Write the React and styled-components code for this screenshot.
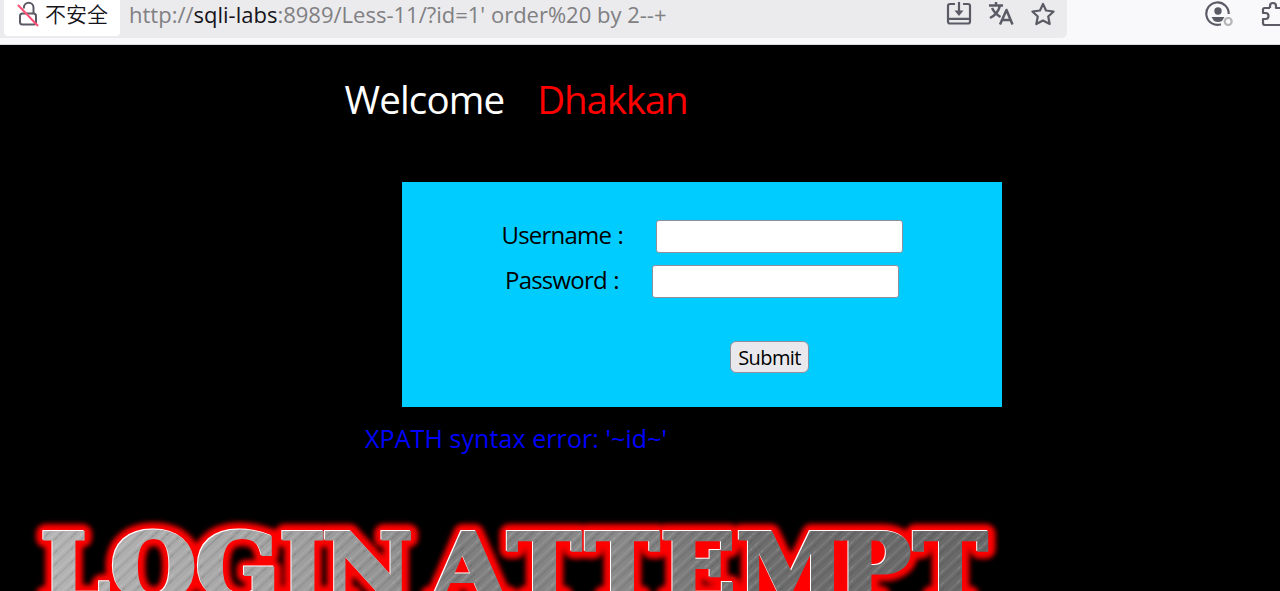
import React from "react";
import styled, { createGlobalStyle } from "styled-components";

const Global = createGlobalStyle`
  * { box-sizing: border-box; }
  body {
    margin: 0;
    background: #000;
    overflow: hidden;
    font-family: "Open Sans", "Noto Sans CJK SC", sans-serif;
  }
`;

const Page = styled.div`
  height: 591px;
  overflow: hidden;
  display: flex;
  flex-direction: column;
`;

const Toolbar = styled.header`
  height: 45px;
  flex: none;
  display: flex;
  align-items: flex-start;
  background: #f9f9fb;
  border-bottom: 1px solid #dcdcde;
`;

const AddressBar = styled.div`
  width: 1067px;
  height: 38px;
  flex: none;
  display: flex;
  padding-left: 4px;
  background: #ebebed;
  border-bottom-right-radius: 5px;
`;

const SecurityChip = styled.div`
  width: 116px;
  height: 36px;
  flex: none;
  display: flex;
  padding-left: 13px;
  background: #fff;
  border-radius: 0 0 4px 4px;
  font-family: "Noto Sans CJK SC", sans-serif;
  font-weight: 350;
  font-size: 21px;
  line-height: 27px;
  color: #15141a;
  white-space: nowrap;
`;

const Url = styled.div`
  width: 826px;
  flex: none;
  padding-left: 9px;
  font-size: 22px;
  line-height: 28px;
  color: #808083;
  white-space: pre;
`;

const Host = styled.span`
  color: #15141a;
`;

const BarIcons = styled.div`
  display: flex;
  gap: 14px;
`;

const WindowIcons = styled.div`
  width: 213px;
  display: flex;
  gap: 28px;
  padding-left: 138px;
  overflow: hidden;
`;

const Icon = styled.svg`
  width: 28px;
  height: 28px;
  flex: none;
  fill: none;
  stroke: #5b5b66;
  stroke-width: ${(p) => p.$weight || 2.2};
  stroke-linejoin: round;
`;

const Content = styled.main`
  flex: 1;
  display: flex;
  flex-direction: column;
  align-items: flex-start;
`;

const Heading = styled.div`
  display: flex;
  gap: 33px;
  margin: 26px 0 0 344.5px;
  font-size: 38.5px;
  line-height: 56px;
  white-space: nowrap;
`;

const HeadingWord = styled.span`
  color: ${(p) => p.$color};
  letter-spacing: ${(p) => p.$spacing}px;
`;

const LoginBox = styled.form`
  width: 600px;
  height: 225px;
  flex: none;
  margin: 55px 0 0 402px;
  padding-top: 38px;
  display: flex;
  flex-direction: column;
  align-items: center;
  background: #00ccff;
`;

const FieldRow = styled.label`
  height: 33px;
  margin-bottom: 12px;
  display: flex;
  align-items: center;
  font-size: 24px;
  line-height: 32px;
  color: #000;
`;

const FieldName = styled.span`
  width: ${(p) => p.$width}px;
  padding-bottom: 3px;
  letter-spacing: -0.8px;
  word-spacing: 1px;
  white-space: nowrap;
`;

const FieldInput = styled.input`
  width: 247px;
  height: 33px;
  margin: 0;
  padding: 2px;
  border: 1px solid #8f8f9d;
  border-radius: 3px;
  background: #fff;
  outline: none;
`;

const SubmitButton = styled.button`
  width: 79px;
  height: 32px;
  margin: 31px 0 0 135px;
  padding: 2px 0 0;
  border: 1px solid #8f8f9d;
  border-radius: 6px;
  background: #e9e9ed;
  color: #000;
  font: 20px/28px "Open Sans", sans-serif;
  letter-spacing: -0.6px;
`;

const ErrorText = styled.p`
  margin: 14px 0 0 365px;
  font-size: 25px;
  line-height: 34px;
  letter-spacing: 0.08px;
  color: #0000ff;
  white-space: nowrap;
`;

const Banner = styled.svg`
  display: block;
  width: 1040px;
  height: 96px;
  margin-top: 40px;
  flex: none;
  font-family: "DejaVu Serif", serif;
  font-weight: 700;
  font-size: 98px;
`;

const LETTERS_X = "41 111 196 280 323 0 431 508 586 661 737 837 914";

function BannerText(props) {
  return (
    <text x={LETTERS_X} y="111.5" {...props}>
      LOGIN ATTEMPT
    </text>
  );
}

function LoginAttempt() {
  return (
    <Banner viewBox="0 0 1040 102" preserveAspectRatio="none">
      <defs>
        <linearGradient id="steel" gradientUnits="userSpaceOnUse" x1="40" y1="0" x2="990" y2="0">
          <stop offset="0" stopColor="#b4b4b4" />
          <stop offset="0.22" stopColor="#a6a6a6" />
          <stop offset="0.36" stopColor="#949494" />
          <stop offset="0.44" stopColor="#7e7e7e" />
          <stop offset="0.6" stopColor="#8a8a8a" />
          <stop offset="0.75" stopColor="#6e6e6e" />
          <stop offset="1" stopColor="#686868" />
        </linearGradient>
        <pattern id="brush" width="19" height="60" patternUnits="userSpaceOnUse" patternTransform="rotate(45)">
          <path d="M2 0V60M11 0V60" stroke="#fff" strokeOpacity=".1" strokeWidth="1.4" />
          <path d="M6 0V60M15 0V60" stroke="#222" strokeOpacity=".1" strokeWidth="1.6" />
        </pattern>
        <filter id="glow" x="-5%" y="-30%" width="110%" height="160%">
          <feGaussianBlur stdDeviation="2.6" />
        </filter>
      </defs>
      <BannerText fill="#f00" stroke="#f00" strokeWidth="19" strokeLinejoin="round" filter="url(#glow)" aria-hidden="true" />
      <BannerText fill="#fff" stroke="#fff" strokeWidth="4.5" transform="translate(-1 -1)" aria-hidden="true" />
      <BannerText fill="url(#steel)" stroke="url(#steel)" strokeWidth="4.5" />
      <BannerText fill="url(#brush)" stroke="url(#brush)" strokeWidth="4.5" aria-hidden="true" />
    </Banner>
  );
}

export default function App() {
  return (
    <Page>
      <Global />
      <Toolbar>
        <AddressBar>
          <SecurityChip>
            <Icon viewBox="0 0 28 28" $weight={2}>
              <path d="M6.900 8.500V7.500a4.800 4.800 0 0 1 9.600 0V13" />
              <rect x="3" y="13.500" width="16" height="11" rx="2.500" />
              <path d="M1 5L21 26" stroke="#ff4f75" />
            </Icon>
            不安全
          </SecurityChip>
          <Url>
            http://<Host>sqli-labs</Host>:8989/Less-11/?id=1' order%20 by 2--+
          </Url>
          <BarIcons>
            <Icon viewBox="0 0 28 28">
              <path d="M9 4H4a2 2 0 0 0-2 2v15.500a2 2 0 0 0 2 2h18a2 2 0 0 0 2-2V6a2 2 0 0 0-2-2h-5M2 18.800h22M13 2v11" />
              <path d="M8.500 10.500h9L13 16z" fill="#5b5b66" stroke="none" />
            </Icon>
            <Icon viewBox="0 0 28 28" $weight={2.5}>
              <path d="M1 5.500h14M8 2v3M12 5.500C10.500 12 6 16 2 18M4 8c2 4 5 7 8.500 9M12 24.500L18.500 10l6 14.500M14.500 20h8" />
            </Icon>
            <Icon viewBox="0 0 28 28">
              <path d="M13 4l3 6.500 7.600 1-5.400 5 1.500 7.500L13 20.500 6.300 24l1.500-7.500-5.400-5 7.600-1z" />
            </Icon>
          </BarIcons>
        </AddressBar>
        <WindowIcons>
          <Icon viewBox="0 0 28 28">
            <path d="M23.700 14A11.200 11.200 0 1 0 16 24.300" />
            <circle cx="13" cy="11" r="3.700" fill="#5b5b66" stroke="none" />
            <path d="M6.500 17h13l-2.500 4q-4 2-8 0z" fill="#5b5b66" stroke="none" />
            <circle cx="23.200" cy="21.500" r="3.500" stroke="#b5b5b8" />
          </Icon>
          <Icon viewBox="0 0 28 28">
            <path d="M9 8V6a3 3 0 0 1 6 0v2h7M9 8H3.500A1.500 1.500 0 0 0 2 9.500V13h2.500a3 3 0 0 1 0 6H2v4a2 2 0 0 0 2 2h19" />
          </Icon>
        </WindowIcons>
      </Toolbar>
      <Content>
        <Heading>
          <HeadingWord $color="#fff" $spacing={-0.85}>Welcome</HeadingWord>
          <HeadingWord $color="#f00" $spacing={-1.2}>Dhakkan</HeadingWord>
        </Heading>
        <LoginBox onSubmit={(e) => e.preventDefault()}>
          <FieldRow>
            <FieldName $width={154}>Username :</FieldName>
            <FieldInput type="text" />
          </FieldRow>
          <FieldRow>
            <FieldName $width={147}>Password :</FieldName>
            <FieldInput type="password" />
          </FieldRow>
          <SubmitButton type="submit">Submit</SubmitButton>
        </LoginBox>
        <ErrorText>XPATH syntax error: '~id~'</ErrorText>
        <LoginAttempt />
      </Content>
    </Page>
  );
}
